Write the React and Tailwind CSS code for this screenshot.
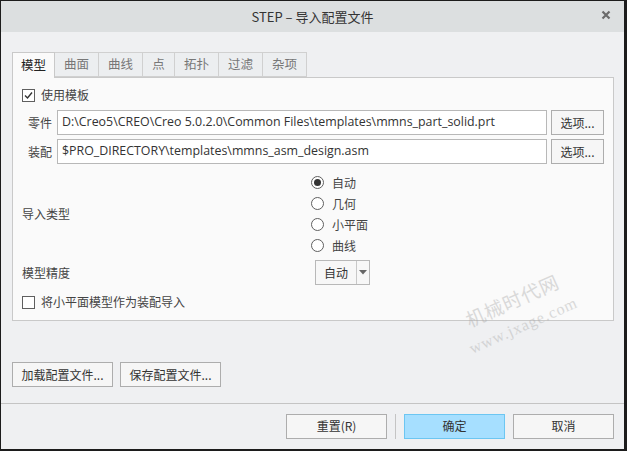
import React from 'react';

const CN = { fontFamily: '"Noto Sans CJK SC", "Noto Sans", sans-serif' };

const TABS = ['模型', '曲面', '曲线', '点', '拓扑', '过滤', '杂项'];
const IMPORT_TYPES = ['自动', '几何', '小平面', '曲线'];

function CheckBox({ checked }) {
  return (
    <span className="w-[13px] h-[13px] border border-[#5f5f5f] bg-white flex items-center justify-center shrink-0">
      {checked && (
        <svg width="11" height="11" viewBox="0 0 11 11">
          <path d="M2 5.5 L4.5 8 L9 2.5" fill="none" stroke="#333" strokeWidth="1.4" />
        </svg>
      )}
    </span>
  );
}

function Radio({ checked }) {
  return (
    <span className="w-[13px] h-[13px] rounded-full border border-[#5f5f5f] bg-white flex items-center justify-center shrink-0">
      {checked && <span className="w-[7px] h-[7px] rounded-full bg-[#333]" />}
    </span>
  );
}

function PathRow({ label, value }) {
  return (
    <div className="flex items-center h-[25px]">
      <span className="w-[35px] pl-[6px] text-[12px] text-[#444]">{label}</span>
      <div
        className="w-[490px] h-[25px] border border-[#b8b8b8] bg-white flex items-center px-[4px] text-[12.4px] text-[#333] whitespace-nowrap overflow-hidden"
        style={{ fontFamily: '"Open Sans", "Noto Sans", sans-serif' }}
      >
        {value}
      </div>
      <button className="ml-[4px] w-[53px] h-[25px] border border-[#adadad] bg-[#f6f6f6] text-[12px] text-[#333]">
        选项...
      </button>
    </div>
  );
}

export default function App() {
  return (
    <div
      className="relative w-[627px] h-[451px] flex flex-col bg-[#eff0f2] border-l border-t border-r-[3px] border-b-[2px] border-[#1c1c1c] overflow-hidden"
      style={CN}
    >
      {/* title bar */}
      <div className="h-[31px] shrink-0 bg-[#dcdfe0] flex items-center relative">
        <span className="flex-1 text-center text-[13px] text-[#333]">STEP – 导入配置文件</span>
        <span className="absolute right-[13px] top-[9px]">
          <svg width="10" height="10" viewBox="0 0 10 10">
            <path d="M1.5 1.5 L8.5 8.5 M8.5 1.5 L1.5 8.5" stroke="#6b6b6b" strokeWidth="2.2" />
          </svg>
        </span>
      </div>

      {/* body */}
      <div className="flex-1 flex flex-col pl-[11px] pr-[10px] pt-[20px]">
        {/* tabs */}
        <div className="flex h-[25px] items-end">
          {TABS.map((t, i) => (
            <div
              key={t}
              className={
                i === 0
                  ? 'h-[26px] mb-[-1px] z-10 bg-[#fafafa] border border-b-0 border-[#c9c9c9] flex items-center justify-center text-[12.5px] text-[#222] w-[43px]'
                  : t === '点'
                  ? 'h-[25px] bg-[#eceef0] border border-l-0 border-[#d0d0d0] flex items-center justify-center text-[12.5px] text-[#777] w-[32px]'
                  : 'h-[25px] bg-[#eceef0] border border-l-0 border-[#d0d0d0] flex items-center justify-center text-[12.5px] text-[#777] w-[44px]'
              }
            >
              {t}
            </div>
          ))}
        </div>

        {/* panel */}
        <div className="h-[244px] bg-[#fafafa] border border-[#c9c9c9] flex flex-col pl-[9px] pt-[10px]">
          <div className="flex items-center gap-[6px] h-[14px]">
            <CheckBox checked />
            <span className="text-[12px] text-[#444]">使用模板</span>
          </div>

          <div className="mt-[8px] flex flex-col gap-[4px]">
            <PathRow label="零件" value="D:\Creo5\CREO\Creo 5.0.2.0\Common Files\templates\mmns_part_solid.prt" />
            <PathRow label="装配" value="$PRO_DIRECTORY\templates\mmns_asm_design.asm" />
          </div>

          <div className="mt-[12px] flex items-center">
            <span className="w-[289px] text-[12px] text-[#444]">导入类型</span>
            <div className="flex flex-col gap-[8px]">
              {IMPORT_TYPES.map((r, i) => (
                <div key={r} className="flex items-center gap-[8px] h-[13px]">
                  <Radio checked={i === 0} />
                  <span className="text-[12px] text-[#444]">{r}</span>
                </div>
              ))}
            </div>
          </div>

          <div className="mt-[8px] flex items-center">
            <span className="w-[293px] text-[12px] text-[#444]">模型精度</span>
            <div className="w-[55px] h-[25px] border border-[#b8b8b8] bg-[#f7f7f7] flex">
              <span className="w-[40px] flex items-center justify-center text-[12px] text-[#333]">自动</span>
              <span className="flex-1 border-l border-[#c8c8c8] flex items-center justify-center">
                <svg width="8" height="5" viewBox="0 0 8 5">
                  <path d="M0 0 L8 0 L4 4.5 Z" fill="#666" />
                </svg>
              </span>
            </div>
          </div>

          <div className="mt-[10px] flex items-center gap-[6px] h-[14px]">
            <CheckBox />
            <span className="text-[12px] text-[#444]">将小平面模型作为装配导入</span>
          </div>
        </div>

        {/* load / save */}
        <div className="mt-[41px] flex gap-[7px]">
          <button className="w-[101px] h-[25px] border border-[#adadad] bg-[#f6f6f6] text-[12px] text-[#333]">
            加载配置文件...
          </button>
          <button className="w-[101px] h-[25px] border border-[#adadad] bg-[#f6f6f6] text-[12px] text-[#333]">
            保存配置文件...
          </button>
        </div>
      </div>

      {/* footer */}
      <div className="h-[46px] shrink-0 border-t border-[#c4c4c4] flex items-center justify-end pr-[10px] pb-[1px]">
        <button className="w-[101px] h-[25px] border border-[#adadad] bg-[#f6f6f6] text-[12px] text-[#333]">
          重置(R)
        </button>
        <span className="mx-[8px] w-px h-[25px] bg-[#c4c4c4]" />
        <button className="w-[101px] h-[25px] border border-[#6cc6f2] bg-[#a6dfff] text-[12px] text-[#333]">
          确定
        </button>
        <button className="ml-[8px] w-[101px] h-[25px] border border-[#adadad] bg-[#f6f6f6] text-[12px] text-[#333]">
          取消
        </button>
      </div>

      {/* watermark */}
      <div className="absolute left-[458px] top-[288px] -rotate-[24deg] flex flex-col items-center gap-[10px] pointer-events-none text-[#a8a8a8] opacity-40">
        <span className="text-[19px] leading-[20px] tracking-[1px]" style={{ fontFamily: '"Noto Sans CJK SC", serif' }}>机械时代网</span>
        <span className="text-[16px] leading-[16px] tracking-[1px]" style={{ fontFamily: '"Liberation Serif", serif' }}>www.jxage.com</span>
      </div>
    </div>
  );
}
